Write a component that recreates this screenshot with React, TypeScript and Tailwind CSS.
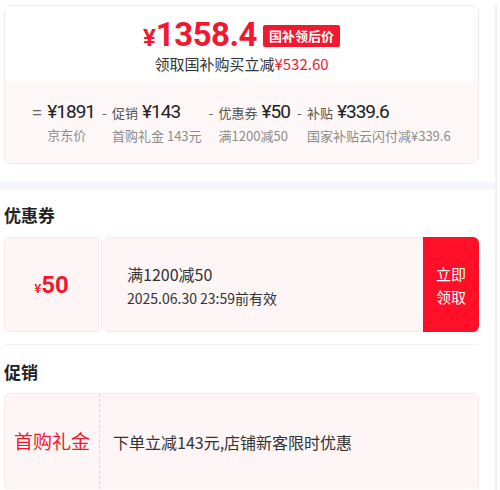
import React from 'react';

const RED = 'text-[#f0192f]';

interface BreakItem {
  sign: string;
  tag?: string;
  amount: string;
  note: string;
}

const breakdown: BreakItem[] = [
  { sign: '=', amount: '¥1891', note: '京东价' },
  { sign: '-', tag: '促销', amount: '¥143', note: '首购礼金 143元' },
  { sign: '-', tag: '优惠券', amount: '¥50', note: '满1200减50' },
  { sign: '-', tag: '补贴', amount: '¥339.6', note: '国家补贴云闪付减¥339.6' },
];

const PriceCard: React.FC = () => (
  <div className="ml-[4px] mr-[16px] mt-[5px] rounded-[7px] border border-[#f0eaea] overflow-hidden">
    {/* Final price */}
    <div className="relative flex flex-col items-center bg-white pt-[12px] h-[75px]">
      <div className="flex items-center gap-[6px] h-[36px]">
        <div className={`flex items-baseline ${RED} font-bold leading-[36px]`}>
          <span className="text-[24px] font-['Roboto',sans-serif]">¥</span>
          <span className="text-[33px] font-['Roboto',sans-serif] tracking-[-0.5px]">1358.4</span>
        </div>
        <span className="bg-[#f0192f] text-white text-[13px] font-bold leading-[22px] px-[6px] rounded-[2px]">
          国补领后价
        </span>
      </div>
      <div className="text-[15px] leading-[20px] text-[#333]">
        领取国补购买立减<span className={`${RED}`}>¥532.60</span>
      </div>
      <div className="absolute bottom-0 left-[237px] w-0 h-0 border-x-[5px] border-x-transparent border-b-[4px] border-b-[#fdf7f7]" />
    </div>

    {/* Breakdown */}
    <div className="bg-[#fdf7f7] h-[82px] flex justify-center gap-[7px] pt-[19px]">
      {breakdown.map((b) => (
        <div key={b.note} className="flex">
          <span className={`text-[#666] ${b.sign === '=' ? 'text-[17px] w-[15px]' : 'text-[14px] w-[10px]'} leading-[24px]`}>
            {b.sign}
          </span>
          <div className="flex flex-col">
            <div className="flex items-baseline gap-[4px] leading-[24px]">
              {b.tag && <span className="text-[13px] text-[#555]">{b.tag}</span>}
              <span className="text-[19px] tracking-[-1px] text-[#222] font-['Roboto',sans-serif]">{b.amount}</span>
            </div>
            <span className="mt-[2px] text-[13px] leading-[18px] text-[#8c8c8c]">{b.note}</span>
          </div>
        </div>
      ))}
    </div>
  </div>
);

const Notch: React.FC<{ pos: 'top' | 'bottom' }> = ({ pos }) => (
  <span
    className={`absolute left-[96px] w-[6px] h-[6px] rounded-full bg-white ${
      pos === 'top' ? 'top-[-3px]' : 'bottom-[-3px]'
    }`}
  />
);

const CouponCard: React.FC = () => (
  <div className="relative ml-[4px] mr-[16px] flex h-[95px]">
    <div className="w-[95px] flex items-center justify-center bg-[#fdf5f6] border border-[#f8e9eb] rounded-l-[6px]">
      <div className={`flex items-baseline ${RED} font-bold`}>
        <span className="text-[12px]">¥</span>
        <span className="text-[24px] font-['Roboto',sans-serif]">50</span>
      </div>
    </div>
    <div className="ml-[2px] flex-1 flex flex-col justify-center pl-[25px] bg-[#fdf5f6] border border-[#f8e9eb] border-r-0">
      <span className="text-[16px] leading-[24px] text-[#333]">满1200减50</span>
      <span className="mt-[2px] text-[14px] leading-[20px] text-[#333]">2025.06.30 23:59前有效</span>
    </div>
    <button className="w-[56px] flex items-center justify-center bg-[#ff0f28] rounded-r-[6px] text-white text-[15px] leading-[23px]">
      立即
      <br />
      领取
    </button>
    <Notch pos="top" />
    <Notch pos="bottom" />
  </div>
);

const PromoCard: React.FC = () => (
  <div className="ml-[4px] mr-[16px] flex h-[96px] shrink-0 bg-[#fdf5f6] border border-[#f8e9eb] border-b-0 rounded-t-[6px]">
    <div className="w-[95px] flex items-center justify-center border-r border-dashed border-[#e3d3d5]">
      <span className={`text-[19px] ${RED}`}>首购礼金</span>
    </div>
    <div className="flex-1 flex items-center pl-[13px] text-[16px] text-[#333]">
      下单立减143元,店铺新客限时优惠
    </div>
  </div>
);

export default function App() {
  return (
    <div className="w-[500px] h-[490px] overflow-hidden bg-white font-['Noto_Sans_CJK_SC','Noto_Sans',sans-serif]">
      <div className="w-[497px] h-full border-r-2 border-[#f1f1f1]">
        <PriceCard />
        <div className="mt-[18px] h-[8px] bg-[#f5f6fa]" />

        <h2 className="mx-[4px] mt-[13px] mb-[10px] text-[17px] leading-[24px] font-bold text-[#222]">优惠券</h2>
        <CouponCard />

        <div className="ml-[4px] mr-[16px] mt-[12px] border-t border-[#f2f2f2]" />
        <h2 className="mx-[4px] mt-[15px] mb-[9px] text-[17px] leading-[24px] font-bold text-[#222]">促销</h2>
        <PromoCard />
      </div>
    </div>
  );
}
